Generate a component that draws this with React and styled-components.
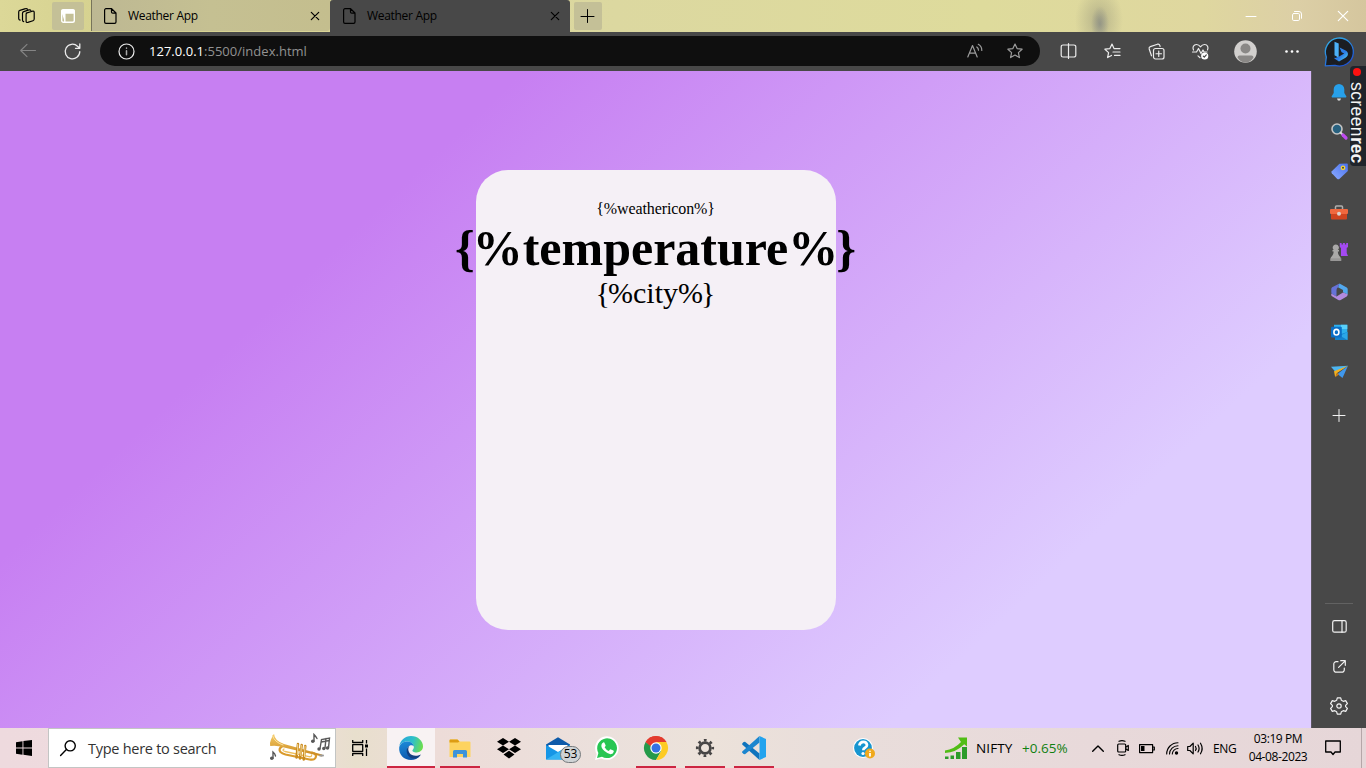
import React from "react";
import styled, { createGlobalStyle } from "styled-components";

const ui = '"Open Sans", "Noto Sans", sans-serif';

const GlobalStyle = createGlobalStyle`
  * { box-sizing: border-box; }
  html, body { margin: 0; padding: 0; overflow: hidden; }
  svg { display: block; flex: none; overflow: visible; }
`;

const Screen = styled.div`
  width: 1366px;
  height: 768px;
  display: grid;
  grid-template-rows: 32px 39px 657px 40px;
  position: relative;
  overflow: hidden;
  background: #484848;
  font-family: ${ui};
`;

/* ---------- shared parts ---------- */

const Slot = styled.div`
  width: ${(p) => p.$w}px;
  height: ${(p) => (p.$h ? p.$h + "px" : "100%")};
  flex: none;
  display: flex;
  align-items: center;
  justify-content: center;
  color: ${(p) => p.$color || "inherit"};
`;

const Icon = ({ size = 18, w, h, box, stroke = 1.1, children }) => (
  <svg
    width={w || size}
    height={h || size}
    viewBox={box || `0 0 ${w || size} ${h || size}`}
    fill="none"
    stroke="currentColor"
    strokeWidth={stroke}
    strokeLinecap="round"
    strokeLinejoin="round"
  >
    {children}
  </svg>
);

/* ---------- title bar ---------- */

const TitleBar = styled.header`
  display: flex;
  color: #000;
  background:
    radial-gradient(ellipse 9px 18px at 1100px 24px, rgba(112, 118, 128, 0.5), transparent),
    radial-gradient(ellipse 24px 34px at 1099px 20px, rgba(140, 140, 118, 0.5), transparent),
    linear-gradient(90deg, #dcd898 0%, #d6d290 7%, #dcd8a0 45%, #dedb9c 72%, #dfd79f 88%, #dccfa6 95%, #d5c69e 100%);
`;

const TabAction = styled.div`
  width: ${(p) => p.$w}px;
  height: ${(p) => p.$h}px;
  margin: 2px 0 0 ${(p) => p.$gap}px;
  display: flex;
  align-items: center;
  justify-content: center;
  border-radius: 2px;
  background: #c4c097;
  color: ${(p) => p.$color};
`;

const Tab = styled.div`
  width: ${(p) => p.$w}px;
  height: ${(p) => (p.$active ? 32 : 31)}px;
  margin-left: ${(p) => p.$gap || 0}px;
  padding: ${(p) => (p.$active ? 0 : 1)}px 11px 0 12px;
  display: flex;
  align-items: center;
  border-radius: ${(p) => (p.$active ? "3px 3px 0 0" : "0 0 3px 0")};
  border-left: 1px solid ${(p) => (p.$active ? "#484848" : "#77745a")};
  background: ${(p) => (p.$active ? "#484848" : "linear-gradient(90deg, #bdb893, #c5c092 50%, #c4be8e)")};
`;

const TabTitle = styled.span`
  flex: 1;
  margin-left: 11px;
  font-size: 12px;
  line-height: 16px;
  letter-spacing: -0.3px;
  white-space: nowrap;
`;

const Spacer = styled.div`
  flex: 1;
`;

const PageIcon = () => (
  <Icon w={13} h={16} stroke={1.2}>
    <path d="M2 .7h5.6L12 5v9a1.4 1.4 0 0 1-1.4 1.4H2A1.4 1.4 0 0 1 .6 14V2.1A1.4 1.4 0 0 1 2 .7zM7.5.8V4a1.2 1.2 0 0 0 1.2 1.2H12" />
  </Icon>
);

const CloseIcon = ({ size = 8 }) => (
  <Icon size={size} stroke={1.2}>
    <path d={`M.3.3l${size - 0.6} ${size - 0.6}M${size - 0.3}.3l-${size - 0.6} ${size - 0.6}`} />
  </Icon>
);

const BrowserTab = ({ active, w, gap }) => (
  <Tab $active={active} $w={w} $gap={gap}>
    <PageIcon />
    <TabTitle>Weather App</TabTitle>
    <CloseIcon />
  </Tab>
);

const TopBar = () => (
  <TitleBar>
    <Slot $w={52}>
      <Icon w={17} h={16} stroke={1.2}>
        <path d="M8.2 5.1l6.2-1.9q1.8-.4 1.8 1.3v6.6q0 1.2-1.2 1.6l-5.2 1.7q-1.7.5-1.7-1.2V6.3q0-.9.7-1.2z" />
        <path d="M5.7 13.6q-1.2-.3-1.2-1.6V5.2q0-1.2 1.2-1.6l5.3-1.7q1.3-.4 1.9.6M2.1 12.2Q.7 11.8.7 10.4V4q0-1.3 1.2-1.7L7.5.7Q8.7.3 9.3 1" />
      </Icon>
    </Slot>
    <TabAction $w={32} $h={28} $gap={0} $color="#fff">
      <Icon size={14} stroke={1.4}>
        <rect x=".7" y=".7" width="12.6" height="12.6" rx="1.8" />
        <path d="M1 1.3h12v2.8H1zM1 4.5h2.8V13" fill="currentColor" />
      </Icon>
    </TabAction>
    <BrowserTab w={239} gap={7} />
    <BrowserTab active w={240} gap={0} />
    <TabAction $w={28} $h={28} $gap={4} $color="#000">
      <Icon size={14} stroke={1}>
        <path d="M6.5.5v13M0 7.5h13" />
      </Icon>
    </TabAction>
    <Spacer />
    <Slot $w={46} $color="#fff">
      <Icon w={10} h={2} stroke={1}><path d="M0 1.5h10" /></Icon>
    </Slot>
    <Slot $w={46} $color="#fff">
      <Icon size={10} stroke={1}>
        <rect x=".5" y="2.5" width="7" height="7" rx="1.3" />
        <path d="M2.5.5H7A2.5 2.5 0 0 1 9.5 3v4.3" />
      </Icon>
    </Slot>
    <Slot $w={46} $color="#fff"><CloseIcon size={10} /></Slot>
  </TitleBar>
);

/* ---------- address row ---------- */

const Toolbar = styled.div`
  display: flex;
  align-items: center;
  padding: 0 3px 1px 6px;
  color: #ececec;
  background: #484848;
`;

const AddressBar = styled.div`
  width: 940px;
  height: 30px;
  margin-left: 6px;
  margin-right: 6px;
  flex: none;
  display: flex;
  align-items: center;
  border-radius: 15px;
  background: #0f0f0f;
`;

const Url = styled.span`
  flex: 1;
  margin: -1px 0 0 -3px;
  color: #929292;
  font-size: 13px;
  letter-spacing: 0.02px;
  white-space: nowrap;
`;

const Host = styled.span`
  color: #fff;
`;

const Star = "M8 1l2.1 4.6 5 .6-3.7 3.4 1 5L8 12.1l-4.4 2.5 1-5L.9 6.2l5-.6z";

const AddressRow = () => (
  <Toolbar>
    <Slot $w={44} $color="#858585">
      <Icon w={16} h={14}><path d="M15.5 6.5H.7M7 .3L.7 6.5 7 12.7" /></Icon>
    </Slot>
    <Slot $w={44}>
      <Icon size={17} stroke={1.3}>
        <path d="M15.8 8.6A7.3 7.3 0 1 1 13.5 3.2L15.6 5M15.8 1v4.3h-4.3" />
      </Icon>
    </Slot>
    <AddressBar>
      <Slot $w={52}>
        <Icon size={17} stroke={1.2}>
          <circle cx="8.5" cy="8.5" r="7.5" />
          <path d="M8.5 7.8v4M8.5 5v.3" stroke="#aaa" strokeWidth="1.5" />
        </Icon>
      </Slot>
      <Url><Host>127.0.0.1</Host>:5500/index.html</Url>
      <Slot $w={40} $color="#9c9c9c">
        <Icon w={16} h={14} stroke={1.2}>
          <path d="M.8 13L5.5 1.5 10.2 13M2.4 9.2h6.2M9.8 3a4 4 0 0 1 1.7 3.2M11.3.3a7 7 0 0 1 3.5 6.1" />
        </Icon>
      </Slot>
      <Slot $w={40} $color="#9c9c9c"><Icon size={16} stroke={1.2}><path d={Star} /></Icon></Slot>
      <Slot $w={5} />
    </AddressBar>
    <Slot $w={45}>
      <Icon w={17} h={16} stroke={1.2}>
        <path d="M6 2H3A1.8 1.8 0 0 0 1.2 3.8v8.4A1.8 1.8 0 0 0 3 14h3M11 2h3a1.8 1.8 0 0 1 1.8 1.8v8.4A1.8 1.8 0 0 1 14 14h-3M6 2h5M6 14h5M8.5.5v15" />
      </Icon>
    </Slot>
    <Slot $w={43}>
      <Icon w={17} h={16} stroke={1.2}>
        <path d="M10 5.6L8 1 5.9 5.6l-5 .6 3.7 3.4-1 5L7.5 12.4M10 5.6h6M9 9h7M10.5 12.4H16" />
      </Icon>
    </Slot>
    <Slot $w={44}>
      <Icon size={17} stroke={1.2}>
        <rect x="5.5" y="5.5" width="10.5" height="10.5" rx="2" />
        <path d="M10.75 8v5.5M8 10.75h5.5M3.5 12.8L1.2 6Q.7 4.2 2.3 3.6L9.5 1.2q1.7-.5 2.3 1.2l.3 1.1" />
      </Icon>
    </Slot>
    <Slot $w={44}>
      <Icon size={17} stroke={1.2}>
        <path d="M8 14.7L6 12.9M1.5 7C.2 4.6 1.5 1.5 4.5 1.5c2 0 3.2 1.2 4 2.3.8-1.1 2-2.3 4-2.3 3 0 4.2 3 3 5.4M.5 9h4l2-3.5 2.5 5 2-3.5 1 2h3" />
        <circle cx="12.7" cy="13" r="3.6" fill="#fff" stroke="none" />
        <path d="M11.3 13.1l1 1 2-2.2" stroke="#444" />
      </Icon>
    </Slot>
    <Slot $w={47}>
      <Icon size={23} stroke={0}>
        <circle cx="11.5" cy="11.5" r="11.3" fill="#d2d0ce" />
        <circle cx="11.5" cy="8.5" r="5" fill="#8a8886" />
        <path d="M3.5 17.5q0-2 2-2h12q2 0 2 2-3 5-8 5t-8-5z" fill="#8a8886" />
      </Icon>
    </Slot>
    <Slot $w={46}>
      <Icon w={14} h={3} stroke={0}>
        <g fill="#fff"><circle cx="1.5" cy="1.5" r="1.3" /><circle cx="7" cy="1.5" r="1.3" /><circle cx="12.5" cy="1.5" r="1.3" /></g>
      </Icon>
    </Slot>
    <Slot $w={48}>
      <Icon size={31} stroke={1.3}>
        <defs>
          <linearGradient id="bing" x1="0" y1="0" x2="0.6" y2="1"><stop stopColor="#35b7e8" /><stop offset="1" stopColor="#1d55d6" /></linearGradient>
          <linearGradient id="bee" x1="0" y1="0" x2="1" y2="1"><stop stopColor="#2f8af0" /><stop offset=".55" stopColor="#2b7de8" /><stop offset="1" stopColor="#5fe0f0" /></linearGradient>
        </defs>
        <path d="M1.3 29.8L2.3 21A14 14 0 1 1 11 29.3z" fill="#1b1d22" stroke="url(#bing)" />
        <path d="M10.5 5.8l4.2 1.7v14.2l-4.2-2.5z" fill="#4bb0f7" stroke="none" />
        <path d="M15.6 11.6l2 4.6 2.6 1.3-5.5 3.3-4.2 1.4v-3l-.2 3.2 4.7 3 6.5-3.7q3.5-2.5 2-5.5-.5-1-1.9-1.7z" fill="url(#bee)" stroke="none" />
      </Icon>
    </Slot>
  </Toolbar>
);

/* ---------- web page ---------- */

const Middle = styled.div`
  display: flex;
`;

const Page = styled.main`
  width: 1311px;
  display: flex;
  align-items: center;
  justify-content: center;
  font-family: "Liberation Serif", "Times New Roman", serif;
  color: #000;
  background: linear-gradient(137deg, #c77ff2 0%, #c77ff2 26%, #deccff 79%, #deccff 100%);
`;

const Card = styled.section`
  width: 360px;
  height: 460px;
  margin-top: 1px;
  padding-top: 30px;
  display: flex;
  flex-direction: column;
  align-items: center;
  border-radius: 32px;
  background: #f5f0f6;
`;

const WeatherIcon = styled.div`
  font-size: 16px;
  line-height: 18px;
  letter-spacing: -0.1px;
`;

const Temperature = styled.div`
  padding-top: 2px;
  font-size: 50px;
  line-height: 56px;
  font-weight: 700;
  white-space: nowrap;
`;

const City = styled.div`
  font-size: 30px;
  line-height: 34px;
`;

const Brace = styled.span`
  margin: 0 -2px;
`;

const Placeholder = ({ name }) => (
  <>
    <Brace>{"{"}</Brace>%{name}%<Brace>{"}"}</Brace>
  </>
);

/* ---------- Edge side bar ---------- */

const SideBar = styled.aside`
  width: 55px;
  padding: 1px 0 2px 0;
  display: flex;
  flex-direction: column;
  align-items: center;
  color: #f2f2f2;
  border-left: 1px solid #5b5760;
  background: #484848;
`;

const Divider = styled.div`
  width: 28px;
  height: 1px;
  margin-bottom: 2px;
  background: #626262;
`;

const SideIcons = () => (
  <SideBar>
    <Slot $w={54} $h={40}>
      <Icon w={16} h={17} stroke={0}>
        <path d="M8 0a5.3 5.3 0 0 0-5.3 5.3V9L.7 12.3q-.5 1 .5 1.200h13.600q1-.2.500-1.200L13.300 9V5.300A5.300 5.300 0 0 0 8 0z" fill="#27a0ea" />
        <path d="M6 14.500h4q-.4 2.300-2 2.300t-2-2.300z" fill="#d9d9d9" />
      </Icon>
    </Slot>
    <Slot $w={52} $h={39}>
      <Icon size={17} stroke={2}>
        <circle cx="6" cy="6" r="5" stroke="#c5c5c5" fill="#28617f" strokeWidth="1.6" />
        <path d="M9.7 9.7l2 2" stroke="#ddd" />
        <path d="M12 12l3 3" stroke="#c04bf0" strokeWidth="3.2" />
      </Icon>
    </Slot>
    <Slot $w={54} $h={41}>
      <Icon size={17} stroke={0}>
        <defs><linearGradient id="tag" x1="0" x2="1" y1="1" y2="0"><stop stopColor="#8cabff" /><stop offset="1" stopColor="#4a72ee" /></linearGradient></defs>
        <path d="M8.5.8L16 .5q.8 0 .8.9v6.600L8.300 15.900q-1 .8-2 0L.8 10.300q-.8-1 0-2z" fill="url(#tag)" />
        <circle cx="12" cy="4.8" r="1.7" stroke="#f5d533" strokeWidth="1.3" fill="#484848" />
      </Icon>
    </Slot>
    <Slot $w={54} $h={40}>
      <Icon w={18} h={15} stroke={0}>
        <path d="M5.5 4V2q0-1 1-1h5q1 0 1 1v2" stroke="#b0aead" strokeWidth="1.5" />
        <rect x="0" y="4" width="18" height="5" rx="1" fill="#f0683f" />
        <path d="M1 9h16v4.500q0 1-1 1H2q-1 0-1-1z" fill="#cf4420" />
        <circle cx="9" cy="8.8" r="2" fill="#d8d3d0" />
      </Icon>
    </Slot>
    <Slot $w={54} $h={40}>
      <Icon size={18} stroke={0}>
        <path d="M9.800 0h1.800v1.500h1.300V0h2v1.500h1.300V0H18v4l-1.300 1v5l1.300 3h-7V5L9.800 4z" fill="#a44af2" />
        <path d="M5.800 1.600a3 3 0 0 1 2 5.300H9v1.500H7.800q0 3.500 2.800 6V17.500H.8v-3.100q2.800-2.500 2.900-6H2.500V6.900h1.300a3 3 0 0 1 2-5.300z" fill="#aaa9a8" />
        <path d="M.3 15.300h11V18H.3z" fill="#989796" />
      </Icon>
    </Slot>
    <Slot $w={54} $h={40}>
      <Icon w={17} h={18} stroke={0}>
        <path d="M8.500.5l7.200 4q1 .7 1 1.800v5.300L12 9.200V7L7 4.300z" fill="#52a8ee" />
        <path d="M8.500.5L7 4.300Q5.500 5.500 5.500 7v6.500L1.200 11q-.9-.7-.9-1.800V5.800q0-1 .9-1.600z" fill="#6672d8" />
        <path d="M16.700 11.200q0 1.500-1 2.200l-6 3.600q-1.200.6-2.400 0L.6 13q-.6-1-.3-2.500l5.200 3 6.500-4z" fill="#b28adf" />
      </Icon>
    </Slot>
    <Slot $w={54} $h={40}>
      <Icon size={17} stroke={0}>
        <path d="M3 .8h13.300V9l-4 3H3z" fill="#2eb1ee" />
        <path d="M10 .8h6.300V5H10z" fill="#58d0fa" />
        <path d="M4 16V12l12.500-4v8z" fill="#1481cc" />
        <path d="M16.500 8v8L9 11.800z" fill="#2aa7e9" />
        <rect x="0" y="2.8" width="10.8" height="10.8" rx="1" fill="#0b6fc7" />
        <ellipse cx="5.4" cy="8.2" rx="2.5" ry="2.8" stroke="#fff" strokeWidth="1.6" />
      </Icon>
    </Slot>
    <Slot $w={54} $h={40}>
      <Icon w={17} h={14} stroke={0}>
        <path d="M0 1.800L17 .8 5 7.500z" fill="#4cb5f0" />
        <path d="M17 .8L11.500 13 6.500 9z" fill="#3f97ec" />
        <path d="M17 .8L3 6.200l1.200 6L6 8z" fill="#f3b01f" />
        <path d="M6 8l-1.800 4.200L8 9.500z" fill="#cf7b16" />
      </Icon>
    </Slot>
    <Slot $w={53} $h={47}><Icon size={13} stroke={1}><path d="M6 .5v12M0 6.500h12" /></Icon></Slot>
    <Spacer />
    <Divider />
    <Slot $w={53} $h={40}>
      <Icon w={15} h={13} stroke={1.2}><rect x=".7" y=".7" width="13.5" height="11.5" rx="1.8" /><path d="M10 .7v11.500" /></Icon>
    </Slot>
    <Slot $w={53} $h={40}>
      <Icon size={13} stroke={1.2}><path d="M5 1.700H3.200A2.400 2.400 0 0 0 .8 4.100v5.700a2.400 2.400 0 0 0 2.400 2.400h5.700a2.400 2.400 0 0 0 2.400-2.400V8M5.600 7.400L12.200.8M7.700.7h4.600v4.600" /></Icon>
    </Slot>
    <Slot $w={54} $h={40}>
      <Icon size={18} stroke={1.2}>
        <path d="M7.300.8h3.400l.7 2.500 1.800 1 2.500-.7 1.700 3-1.800 1.800v1.200l1.800 1.800-1.700 3-2.500-.7-1.800 1-.7 2.500H7.300l-.7-2.500-1.800-1-2.500.7-1.700-3 1.800-1.800V8.400L.6 6.600l1.700-3 2.500.7 1.800-1z" />
        <circle cx="9" cy="9" r="2.2" />
      </Icon>
    </Slot>
  </SideBar>
);

const RecorderTag = styled.div`
  position: absolute;
  right: 0;
  top: 66px;
  width: 16px;
  height: 100px;
  padding: 2px 2px 0 0;
  display: flex;
  flex-direction: column;
  align-items: center;
  gap: 6px;
  border-radius: 4px 0 0 4px;
  background: #20242b;
`;

const RecordDot = styled.i`
  width: 8px;
  height: 8px;
  flex: none;
  border-radius: 50%;
  background: #fd1111;
`;

const RecorderName = styled.span`
  writing-mode: vertical-rl;
  font-family: "Liberation Sans", Arial, sans-serif;
  font-size: 17.5px;
  line-height: 14px;
  letter-spacing: 0.4px;
  color: #f4f4f4;
  b { font-weight: 700; letter-spacing: 0; }
`;

/* ---------- Windows task bar ---------- */

const TaskBar = styled.footer`
  display: flex;
  align-items: center;
  color: #000;
  background: linear-gradient(90deg, #eedade 0%, #efdcdf 20%, #e8dfcd 26%, #eddcd8 32%, #ebe0dc 44%, #ece2da 52%, #e9dedb 60%, #e8d9da 80%, #e6d6d8 100%);
`;

const SearchBox = styled.div`
  width: 288px;
  height: 40px;
  display: flex;
  align-items: center;
  padding: 0 4px 0 11px;
  border: 1px solid #c3c5c4;
  background: #fff;
`;

const SearchText = styled.span`
  flex: 1;
  margin-left: 12px;
  color: #333;
  font-size: 14.5px;
  letter-spacing: -0.27px;
  white-space: nowrap;
`;

const AppButton = styled.div`
  width: ${(p) => (p.$focused ? 48 : 40)}px;
  height: 40px;
  flex: none;
  display: flex;
  align-items: center;
  justify-content: center;
  position: relative;
  border-top: 2px solid transparent;
  border-bottom: 2px solid ${(p) => (p.$open ? "#cc2541" : "transparent")};
  background: ${(p) => (p.$focused ? "#f8f2f3" : "transparent")};
`;

const AppList = styled.div`
  display: flex;
  gap: 9px;
  margin-left: 3px;
  & > :first-child { margin-right: -4px; }
`;

const Count = styled.span`
  position: absolute;
  left: 22px;
  top: 16px;
  width: 21px;
  height: 17px;
  border: 1px solid #75797c;
  border-radius: 9px;
  background: #cfd3d5;
  font-size: 12px;
  line-height: 14px;
  text-align: center;
`;

const TrayText = styled.span`
  font-size: ${(p) => p.$size || 12}px;
  letter-spacing: ${(p) => p.$track || 0}px;
  width: ${(p) => p.$w}px;
  color: ${(p) => p.$color || "#000"};
  white-space: nowrap;
`;

const Clock = styled.div`
  width: 70px;
  display: flex;
  flex-direction: column;
  align-items: center;
  font-size: 12px;
  line-height: 18px;
  letter-spacing: -0.4px;
  white-space: nowrap;
`;

const ShowDesktop = styled.div`
  width: 5px;
  height: 40px;
  border-left: 1px solid #b5a6a8;
`;

const Trumpet = () => (
  <svg width="62" height="30" viewBox="0 0 62 30" fill="none" strokeLinecap="round">
    <defs>
      <linearGradient id="brass" x1="0" y1="0" x2="0" y2="1"><stop stopColor="#f6cc68" /><stop offset="1" stopColor="#c9871c" /></linearGradient>
    </defs>
    <path d="M13 13.500q-4 2.500-1.500 5.500 1.500 1.600 5 2.500l24 5q6.500 1 6.500-3.500 0-2.500-4-3.500" stroke="#d99a2b" strokeWidth="2.2" />
    <path d="M15 16q-2.500 1.500 1 2.500l24 5.200q3 .3 2.500-1.700" stroke="#efbf5c" strokeWidth="1.3" />
    <path d="M5 .8Q5.500 8 15 11l38 10.500v2L14 14.300Q8 12 1.200 13 .3 10.500 2 6.500T5 .8z" fill="url(#brass)" />
    <path d="M3.500 2.500Q5 9 14 12" stroke="#fbe3a3" strokeWidth="1" />
    <path d="M29 11l-1.500 13.500M32.700 12L31 25.500M36.300 13L34.700 26.500" stroke="#c98a1f" strokeWidth="2.5" />
    <path d="M28.700 11.500v10M32.300 12.500l-.5 10M36 13.500l-.5 10" stroke="#f7dd9a" strokeWidth="1" />
    <path d="M51 22.500h3" stroke="#999" strokeWidth="2" />
    <g stroke="#585858" strokeWidth="1.4">
      <path d="M45 8V1.500q2 2 3 4M51 15.500l1.500-9 8-1.500-1 10M56 15l1-9.500M52.300 9l8-1.500M4 25v-6q2 1.500 2.500 4" />
    </g>
    <g fill="#585858">
      <circle cx="43.8" cy="8.3" r="1.8" /><circle cx="50" cy="16" r="1.7" /><circle cx="54.8" cy="15.5" r="1.7" /><circle cx="58.5" cy="15" r="1.7" /><circle cx="2.8" cy="25.3" r="1.8" />
    </g>
  </svg>
);

const EdgeIcon = () => (
  <svg width="24" height="24" viewBox="0 0 24 24">
    <defs>
      <linearGradient id="e1" x1="0" y1="0.3" x2="1" y2="0.5"><stop stopColor="#2aa5dc" /><stop offset=".55" stopColor="#2fc0c8" /><stop offset="1" stopColor="#6cde4c" /></linearGradient>
      <linearGradient id="e2" x1="0" y1="0" x2="0.3" y2="1"><stop stopColor="#1b8ddb" /><stop offset="1" stopColor="#0f58ad" /></linearGradient>
    </defs>
    <path d="M9 10h6v8H9z" fill="#f8f2f3" />
    <path d="M.3 10.500C1 4.500 6 0 12 0c7 0 12 5 12 10.300 0 4-3.200 6.200-6.200 6.200-3.500 0-4.400-1.300-4.400-2 0-.6 1.500-1.200 1.500-3.400C14.900 8 12 5.500 8.300 5.500 4 5.500 1 8 .3 10.500z" fill="url(#e1)" />
    <path d="M.2 11.500C1 7.500 4.500 5.500 8.300 5.500c3.700 0 6.200 2.300 6.600 5-1-1.300-2.700-1.700-4-1C8 11 7.500 14 9 16.700c2 3.500 7 5 12.300 2.500C19 22.500 15.500 24 12 24 5 24-.5 18.500.2 11.500z" fill="url(#e2)" />
    <path d="M10.300 9.800C6.500 12.500 7 18 10.500 21c2.500 2 6 1.800 8.500.5 1-.6 1.900-1.400 3-3-5 2.300-9.500 1.200-11.500-1.500-1.700-2.500-1.500-5-.2-7.200z" fill="#123f80" />
  </svg>
);

const apps = [
  { id: "edge", open: true, focused: true, icon: <EdgeIcon /> },
  {
    id: "files", open: true, icon: (
      <svg width="22" height="19" viewBox="0 0 22 19">
        <path d="M.5 1.500Q.5.500 1.500.5h7l2 2h10q1 0 1 1V18H.5z" fill="#fdd35f" />
        <path d="M.5 1.500Q.5.500 1.500.5h7l2 2-1.500 1H.5z" fill="#dd9c12" />
        <path d="M4 18.500v-6q0-1.500 1.500-1.500h11q1.500 0 1.500 1.500v6h-4V15H8v3.500z" fill="#3d93da" />
      </svg>
    ),
  },
  {
    id: "dropbox", icon: (
      <svg width="24" height="21" viewBox="0 0 24 21" fill="#000">
        <path d="M6 0l6 3.700-6 3.700L0 3.700zM18 0l6 3.700-6 3.700-6-3.700zM6 7.500l6 3.700L6 15l-6-3.800zM18 7.500l6 3.700-6 3.800-6-3.800zM12 12.800l5.500 3.600L12 20.500l-5.500-4.100z" />
      </svg>
    ),
  },
  {
    id: "mail", icon: (
      <svg width="24" height="23" viewBox="0 0 24 23">
        <path d="M0 7.500L12 .3l12 7.200v4H0z" fill="#0d5aa9" />
        <path d="M2.500 8h19v7h-19z" fill="#fff" />
        <path d="M0 8l12 7 12-7v14.500H0z" fill="#1696e6" />
        <path d="M0 22.500L24 8v14.500z" fill="#35b4f3" />
      </svg>
    ),
    count: 53,
  },
  {
    id: "whatsapp", icon: (
      <svg width="24" height="24" viewBox="0 0 24 24">
        <path d="M0 24l1.700-6A11.800 11.800 0 1 1 6.200 22.400z" fill="#fff" />
        <path d="M2 22l1.400-5A9.900 9.900 0 1 1 7 20.700z" fill="#28c653" />
        <path d="M8.200 6.500q.6-.4 1.100 0l1.300 2.800q.2.500-.2 1l-.8 1q1.500 2.700 4.200 3.700l1.200-1.400q.4-.4.900-.2l2.500 1.200q.5.300.4.900-.4 2.500-3.300 2.700-2.500 0-6-3.100-3.600-3.500-3.100-6.200.3-1.500 1.800-2.400z" fill="#fff" />
      </svg>
    ),
  },
  {
    id: "chrome", open: true, icon: (
      <svg width="24" height="24" viewBox="0 0 24 24">
        <path d="M12 12L1.600 6A12 12 0 0 1 22.400 6z" fill="#e33b2e" />
        <path d="M12 12h-5.200L1.600 6A12 12 0 0 0 12 24l5.200-9z" fill="#249a49" />
        <path d="M12 6h10.400A12 12 0 0 1 12 24l5.200-9z" fill="#fdcb24" />
        <path d="M1.600 6l5.200 9 5.200-3z" fill="#249a49" />
        <path d="M1.600 6A12 12 0 0 1 22.400 6H12a6 6 0 0 0-5.500 4.200z" fill="#e33b2e" />
        <circle cx="12" cy="12" r="5.7" fill="#fff" /><circle cx="12" cy="12" r="4.5" fill="#3372e4" />
      </svg>
    ),
  },
  {
    id: "settings", open: true, icon: (
      <svg width="20" height="20" viewBox="0 0 20 20" fill="none" stroke="#474545">
        <circle cx="10" cy="10" r="5.4" strokeWidth="2.8" />
        <circle cx="10" cy="10" r="7.8" strokeWidth="2.6" strokeDasharray="2.7 3.426" strokeDashoffset="1.35" />
      </svg>
    ),
  },
  {
    id: "code", open: true, icon: (
      <svg width="24" height="24" viewBox="0 0 24 24">
        <path d="M17.500 24v-6.500L3 5.700 1.600 6 .2 7.500v1z" fill="#0f74bd" />
        <path d="M17.500 0v6.500L3 18.300 1.600 18 .2 16.500v-1z" fill="#1c86cf" />
        <path d="M17.500 0L24 3v18l-6.500 3z" fill="#23a3ee" />
      </svg>
    ),
  },
];

const TaskRow = () => (
  <TaskBar>
    <Slot $w={48}>
      <Icon size={16} stroke={0}>
        <path d="M0 2.200L6.500 1.300v6.200H0zM7.400 1.100L16 0v7.500H7.400zM0 8.500h6.500v6.200L0 13.800zM7.400 8.500H16V16l-8.600-1.200z" fill="#000" />
      </Icon>
    </Slot>
    <SearchBox>
      <Icon size={16} stroke={1.4}><circle cx="10.2" cy="5.8" r="5.1" /><path d="M6.400 9.600L.6 15.400" /></Icon>
      <SearchText>Type here to search</SearchText>
      <Trumpet />
    </SearchBox>
    <Slot $w={48}>
      <Icon size={16} stroke={1.3}>
        <path d="M.7 0v2.500h10V0M.7 16v-2.500h10V16M.7 4.700h10v6.600H.7zM14.500 0v3.500M14.500 8.500V16" strokeLinecap="butt" />
        <path d="M13 4.500h3v3h-3z" fill="#000" stroke="none" />
      </Icon>
    </Slot>
    <AppList>
      {apps.map((a) => (
        <AppButton key={a.id} $open={a.open} $focused={a.focused}>
          {a.icon}
          {a.count && <Count>{a.count}</Count>}
        </AppButton>
      ))}
    </AppList>
    <Spacer />
    <Slot $w={60}>
      <svg width="22" height="21" viewBox="0 0 22 21">
        <circle cx="10" cy="10" r="10" fill="#fff" /><circle cx="10" cy="10" r="8.9" fill="#1795d0" />
        <path d="M6.300 7.500Q7 3.800 10.300 3.800t3.700 3.200q0 1.700-2 2.800-1.700.8-1.700 2.500" fill="none" stroke="#fff" strokeWidth="2.7" />
        <circle cx="10" cy="15.5" r="1.6" fill="#fff" />
        <circle cx="17" cy="15.5" r="5" fill="#f0a91c" /><path d="M17 12.700v1M17 15v3.500" stroke="#fff" strokeWidth="1.8" />
      </svg>
    </Slot>
    <Slot $w={50} />
    <Slot $w={24}>
      <svg width="22" height="22" viewBox="0 0 22 22" fill="#2c9c2a">
        <path d="M0 19.500h3.500V22H0zM5.500 18.500H9V22H5.500zM11 15h4.500v7H11zM17 10h5v12h-5z" />
        <path d="M0 13.500Q9 12.500 16 5L13 0.500H22v9l-2.800-2.300Q11 15.500 0 16z" fill="#51bd16" />
      </svg>
    </Slot>
    <Slot $w={8} />
    <TrayText $w={46} $size={13.5} $track={0.1}>NIFTY</TrayText>
    <TrayText $w={61} $size={13.5} $color="#108010">+0.65%</TrayText>
    <Slot $w={30}><Icon w={12} h={7} stroke={1.4}><path d="M.7 6.300L6 1l5.300 5.300" /></Icon></Slot>
    <Slot $w={19}>
      <Icon w={12} h={16} stroke={1.2}>
        <rect x=".7" y="4" width="8" height="8" rx="1" /><path d="M9 7l2.300-1.500v5L9 9M2 1.300Q5 0 8 1.300M2 14.700q3 1.300 6 0" />
      </Icon>
    </Slot>
    <Slot $w={29}>
      <Icon w={16} h={9} stroke={1.2}><path d="M.6.600h13v8H.6zM14 3h1.300v3H14" /><path d="M2 2h3.500v5H2z" fill="#000" stroke="none" /></Icon>
    </Slot>
    <Slot $w={22}>
      <Icon size={13} stroke={1.1}>
        <path d="M.7 12A11.300 11.300 0 0 1 12 .7M3.500 12A8.500 8.500 0 0 1 12 3.700M6.300 12A5.700 5.700 0 0 1 12 6.500" />
        <circle cx="10.5" cy="11" r="1.7" fill="#000" stroke="none" />
      </Icon>
    </Slot>
    <Slot $w={24}>
      <Icon w={17} h={13} stroke={1.2}>
        <path d="M.7 4.500h2.200L6.200 1.200v10.600L2.900 8.500H.7zM8.500 4.500q1.300 2 0 4M11 3q2.200 3.500 0 7M13.500 1.200q3.300 5.300 0 10.600" />
      </Icon>
    </Slot>
    <Slot $w={6} />
    <TrayText $w={30} $track={-0.3}>ENG</TrayText>
    <Clock><span>03:19 PM</span><span>04-08-2023</span></Clock>
    <Slot $w={40}>
      <Icon w={16} h={16} stroke={1.3}><path d="M.7 1h14.600v11H10l-2 2.500L6 12H.7z" /></Icon>
    </Slot>
    <Slot $w={8} />
    <ShowDesktop />
  </TaskBar>
);

export default function App() {
  return (
    <>
      <GlobalStyle />
      <Screen>
        <TopBar />
        <AddressRow />
        <Middle>
          <Page>
            <Card>
              <WeatherIcon>{"{%weathericon%}"}</WeatherIcon>
              <Temperature><Placeholder name="temperature" /></Temperature>
              <City><Placeholder name="city" /></City>
            </Card>
          </Page>
          <SideIcons />
        </Middle>
        <TaskRow />
        <RecorderTag>
          <RecordDot />
          <RecorderName>screen<b>rec</b></RecorderName>
        </RecorderTag>
      </Screen>
    </>
  );
}
